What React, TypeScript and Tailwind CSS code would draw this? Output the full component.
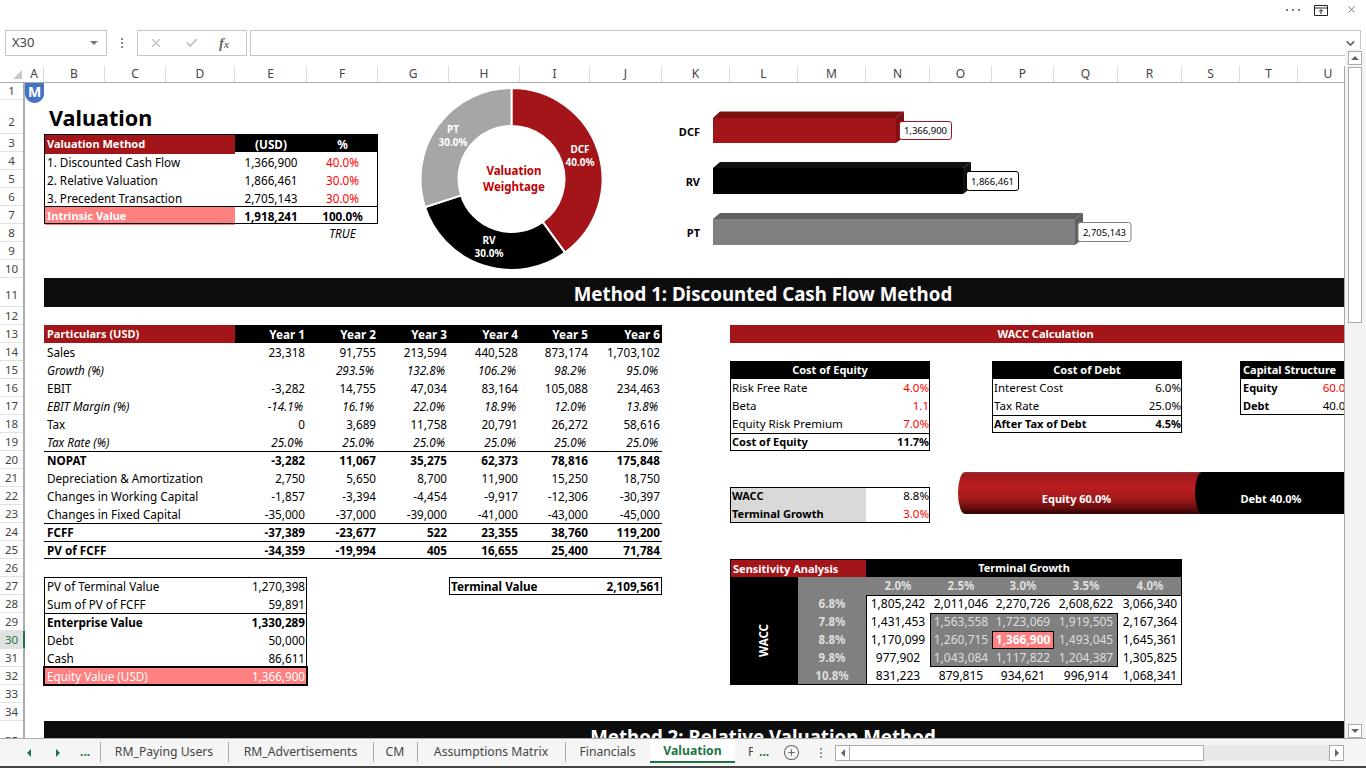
import { Check, ChevronDown, CirclePlus, X } from "lucide-react";
import clsx from "clsx";
import type { ReactNode } from "react";

const columns = ["A", "B", "C", "D", "E", "F", "G", "H", "I", "J", "K", "L", "M", "N", "O", "P", "Q", "R", "S", "T", "U"];
const rowNumbers = Array.from({ length: 35 }, (_, i) => i + 1);

const forecast = [
  { label: "Sales", values: ["23,318", "91,755", "213,594", "440,528", "873,174", "1,703,102"] },
  { label: "Growth (%)", kind: "italic", values: ["", "293.5%", "132.8%", "106.2%", "98.2%", "95.0%"] },
  { label: "EBIT", values: ["-3,282", "14,755", "47,034", "83,164", "105,088", "234,463"] },
  { label: "EBIT Margin (%)", kind: "italic", values: ["-14.1%", "16.1%", "22.0%", "18.9%", "12.0%", "13.8%"] },
  { label: "Tax", values: ["0", "3,689", "11,758", "20,791", "26,272", "58,616"] },
  { label: "Tax Rate (%)", kind: "italic", values: ["25.0%", "25.0%", "25.0%", "25.0%", "25.0%", "25.0%"] },
  { label: "NOPAT", kind: "total", values: ["-3,282", "11,067", "35,275", "62,373", "78,816", "175,848"] },
  { label: "Depreciation & Amortization", values: ["2,750", "5,650", "8,700", "11,900", "15,250", "18,750"] },
  { label: "Changes in Working Capital", values: ["-1,857", "-3,394", "-4,454", "-9,917", "-12,306", "-30,397"] },
  { label: "Changes in Fixed Capital", values: ["-35,000", "-37,000", "-39,000", "-41,000", "-43,000", "-45,000"] },
  { label: "FCFF", kind: "total", values: ["-37,389", "-23,677", "522", "23,355", "38,760", "119,200"] },
  { label: "PV of FCFF", kind: "total", values: ["-34,359", "-19,994", "405", "16,655", "25,400", "71,784"] },
];

const sensitivityRows = [
  { wacc: "6.8%", row: "row-start-3", values: ["1,805,242", "2,011,046", "2,270,726", "2,608,622", "3,066,340"] },
  { wacc: "7.8%", row: "row-start-4", values: ["1,431,453", "1,563,558", "1,723,069", "1,919,505", "2,167,364"] },
  { wacc: "8.8%", row: "row-start-5", values: ["1,170,099", "1,260,715", "1,366,900", "1,493,045", "1,645,361"] },
  { wacc: "9.8%", row: "row-start-6", values: ["977,902", "1,043,084", "1,117,822", "1,204,387", "1,305,825"] },
  { wacc: "10.8%", row: "row-start-7", values: ["831,223", "879,815", "934,621", "996,914", "1,068,341"] },
];

const tabs = [
  { name: "RM_Paying Users", width: "w-[128px]" },
  { name: "RM_Advertisements", width: "w-[145px]" },
  { name: "CM", width: "w-[44px]" },
  { name: "Assumptions Matrix", width: "w-[148px]" },
  { name: "Financials", width: "w-[85px]" },
];

// donut geometry, in page coordinates
const CX = 511.5;
const CY = 178;
function slice(from: number, to: number) {
  const pt = (r: number, a: number) => {
    const rad = (a * Math.PI) / 180;
    return `${(CX + r * Math.sin(rad)).toFixed(2)} ${(CY - r * Math.cos(rad)).toFixed(2)}`;
  };
  const large = to - from > 180 ? 1 : 0;
  return `M${pt(91, from)}A91 91 0 ${large} 1 ${pt(91, to)}L${pt(53, to)}A53 53 0 ${large} 0 ${pt(53, from)}Z`;
}

function Row({ className, children }: { className?: string; children: ReactNode }) {
  return <div className={clsx("col-span-full grid grid-cols-subgrid", className)}>{children}</div>;
}

function NarrowRow({ label, value, className, valueClass }: { label: string; value: string; className?: string; valueClass?: string }) {
  return (
    <Row className={className}>
      <div className="col-span-2 pl-[2px]">{label}</div>
      <div className={clsx("text-right pr-[1px]", valueClass)}>{value}</div>
    </Row>
  );
}

function Donut() {
  return (
    <svg viewBox="378 82 284 196" className="col-[7/11] row-[1/11] h-[196px] w-[284px] self-start">
      <path d={slice(0, 144)} fill="#a31518" stroke="#fff" strokeWidth="2" />
      <path d={slice(144, 252)} fill="#000" stroke="#fff" strokeWidth="2" />
      <path d={slice(252, 360)} fill="#a6a6a6" stroke="#fff" strokeWidth="2" />
      <g fill="#fff" fontSize="10" fontWeight="700" textAnchor="middle">
        <text x="580" y="152">DCF</text>
        <text x="580" y="165">40.0%</text>
        <text x="489" y="243">RV</text>
        <text x="489" y="256">30.0%</text>
        <text x="453" y="132">PT</text>
        <text x="453" y="145">30.0%</text>
      </g>
      <g fill="#c00000" fontSize="11.5" fontWeight="700" textAnchor="middle">
        <text x="514" y="174">Valuation</text>
        <text x="514" y="190">Weightage</text>
      </g>
    </svg>
  );
}

function BarChart() {
  return (
    <svg viewBox="662 100 500 170" className="col-[11/22] row-[2/11] h-[170px] w-[500px] self-start">
      <g fill="#000" fontSize="11" fontWeight="700" textAnchor="end">
        <text x="700" y="136">DCF</text>
        <text x="700" y="186">RV</text>
        <text x="700" y="237">PT</text>
      </g>
      <polygon points="713,118 720,111.5 904,111.5 896,118" fill="#7c0f10" />
      <polygon points="896,118 904,111.5 904,137 896,143" fill="#7c0f10" />
      <rect x="713" y="118" width="183" height="25" fill="#a31518" />
      <polygon points="713,168 720,162 971,162 963,168" fill="#111" />
      <polygon points="963,168 971,162 971,188 963,194" fill="#111" />
      <rect x="713" y="168" width="250" height="26" fill="#000" />
      <polygon points="713,219 720,213 1083,213 1075,219" fill="#606060" />
      <polygon points="1075,219 1083,213 1083,239 1075,245" fill="#606060" />
      <rect x="713" y="219" width="362" height="26" fill="#808080" />
      <g fill="#fff" strokeWidth="1">
        <rect x="899.5" y="121.5" width="52" height="18" rx="2.5" stroke="#a31518" />
        <rect x="966.5" y="171.5" width="52" height="19" rx="2.5" stroke="#000" />
        <rect x="1078" y="222.5" width="53" height="19" rx="2.5" stroke="#808080" />
      </g>
      <g fill="#000" fontSize="9.5" textAnchor="middle">
        <text x="925.5" y="134">1,366,900</text>
        <text x="992.5" y="184.5">1,866,461</text>
        <text x="1104.5" y="235.5">2,705,143</text>
      </g>
    </svg>
  );
}

function Sensitivity() {
  return (
    <div className="col-[12/19] row-[26/33] grid grid-cols-subgrid grid-rows-subgrid bg-black text-center text-[12px] outline outline-1 -outline-offset-1 outline-black">
      <div className="col-span-2 mt-[1px] ml-[1px] bg-[#a31518] pl-[2px] text-left text-[11px] font-bold text-white">Sensitivity Analysis</div>
      <div className="col-span-5 text-[11px] font-bold text-white">Terminal Growth</div>
      <div className="col-start-1 row-span-6 row-start-2 flex items-center justify-center pt-[18px] text-[11.5px] font-bold text-white">
        <span className="rotate-180 [writing-mode:vertical-rl]">WACC</span>
      </div>
      <div className="col-start-2 row-start-2 bg-[#808080]" />
      {["2.0%", "2.5%", "3.0%", "3.5%", "4.0%"].map((g) => (
        <div key={g} className="row-start-2 bg-[#808080] text-[11.5px] font-bold text-[#dedede]">{g}</div>
      ))}
      {sensitivityRows.map((row, r) => (
        <div key={row.wacc} className={clsx("col-[2/8] grid grid-cols-subgrid", row.row)}>
          <div className="bg-[#808080] text-[11.5px] font-bold text-[#dedede]">{row.wacc}</div>
          {row.values.map((v, c) => {
            const inner = r > 0 && r < 4 && c > 0 && c < 4;
            const center = r === 2 && c === 2;
            return (
              <div
                key={v}
                className={clsx(
                  center ? "bg-[#ff8080] font-bold text-white outline outline-1 -outline-offset-1 outline-black" : inner ? "bg-[#808080] text-[#dedede]" : "bg-white text-black"
                )}
              >
                {v}
              </div>
            );
          })}
        </div>
      ))}
      <div className="pointer-events-none col-start-3 col-end-8 row-start-3 row-end-8 outline outline-1 -outline-offset-1 outline-black" />
      <div className="pointer-events-none col-start-4 col-end-7 row-start-4 row-end-7 outline outline-1 -outline-offset-1 outline-black" />
    </div>
  );
}

function Sheet() {
  return (
    <div className="grid h-full w-[1333px] grid-cols-[19px_61px_61px_69px_72px_71px_71px_71px_70px_72px_68px_68px_68px_64px_62px_62px_64px_64px_58px_58px_60px] grid-rows-[17px_34px_repeat(8,18px)_29px_18px_repeat(22,18px)_29px] text-[11.7px] leading-[18px] text-black">
      {/* logo */}
      <svg viewBox="0 0 19 20" className="col-start-1 row-start-1 h-[20px] w-[19px]">
        <path d="M0 0H19V11C19 16 14 20 9.5 20C5 20 0 16 0 11Z" fill="#4472c4" />
        <text x="9.5" y="14" fill="#fff" fontSize="14" fontWeight="700" textAnchor="middle">M</text>
      </svg>

      <div className="col-[2/7] row-start-2 pt-[2px] pl-[5px] text-[21.6px] leading-[32px] font-bold">Valuation</div>

      {/* summary */}
      <div className="col-[2/7] row-[3/8] grid grid-cols-subgrid grid-rows-subgrid leading-[20px] outline outline-1 -outline-offset-1 outline-black">
        <Row className="bg-black font-bold text-white">
          <div className="col-span-3 mt-[1px] ml-[1px] bg-[#a31518] pl-[2px] text-[11px] leading-[18px]">Valuation Method</div>
          <div className="text-center">(USD)</div>
          <div className="text-center">%</div>
        </Row>
        {[
          ["1. Discounted Cash Flow", "1,366,900", "40.0%"],
          ["2. Relative Valuation", "1,866,461", "30.0%"],
          ["3. Precedent Transaction", "2,705,143", "30.0%"],
        ].map(([a, b, c]) => (
          <Row key={a}>
            <div className="col-span-3 pl-[3px]">{a}</div>
            <div className="text-center">{b}</div>
            <div className="text-center text-[#ff0000]">{c}</div>
          </Row>
        ))}
        <Row className="border-t border-black font-bold leading-[19px]">
          <div className="col-span-3 mb-[1px] ml-[1px] bg-[#ff8080] pl-[2px] text-[11px] leading-[17px] text-white">Intrinsic Value</div>
          <div className="text-center">1,918,241</div>
          <div className="text-center">100.0%</div>
        </Row>
      </div>
      <div className="col-start-6 row-start-8 text-center italic">TRUE</div>

      <Donut />
      <BarChart />

      {/* method 1 band */}
      <div className="col-[2/22] row-start-11 overflow-hidden bg-[#0d0d0d] pl-[124px] text-center text-[18.7px] leading-[32px] font-bold text-white">
        Method 1: Discounted Cash Flow Method
      </div>

      {/* forecast */}
      <div className="col-[2/11] row-[13/26] grid grid-cols-subgrid grid-rows-subgrid">
        <Row className="bg-black font-bold text-white">
          <div className="col-span-3 bg-[#a31518] pl-[3px] text-[11px]">Particulars (USD)</div>
          {["Year 1", "Year 2", "Year 3", "Year 4", "Year 5", "Year 6"].map((y) => (
            <div key={y} className="pr-[2px] text-right">{y}</div>
          ))}
        </Row>
        {forecast.map((row) => (
          <Row
            key={row.label}
            className={clsx(row.kind === "italic" && "italic", row.kind === "total" && "border-t border-black font-bold leading-[17px]", row.label === "PV of FCFF" && "border-b")}
          >
            <div className="col-span-3 pl-[3px]">{row.label}</div>
            {row.values.map((v, i) => (
              <div key={i} className={clsx("text-right", row.kind === "italic" ? "pr-[4px]" : "pr-[2px]")}>{v}</div>
            ))}
          </Row>
        ))}
      </div>

      {/* equity bridge */}
      <div className="col-[2/6] row-[27/33] grid grid-cols-subgrid grid-rows-subgrid outline outline-1 -outline-offset-1 outline-black">
        {[
          ["PV of Terminal Value", "1,270,398", ""],
          ["Sum of PV of FCFF", "59,891", ""],
          ["Enterprise Value", "1,330,289", "border-t border-black font-bold leading-[17px]"],
          ["Debt", "50,000", ""],
          ["Cash", "86,611", ""],
        ].map(([a, b, c]) => (
          <Row key={a} className={c}>
            <div className="col-span-3 pl-[3px]">{a}</div>
            <div className="pr-[2px] text-right">{b}</div>
          </Row>
        ))}
        <Row className="bg-[#ff8080] text-white outline outline-2 -outline-offset-1 outline-black">
          <div className="col-span-3 pl-[3px]">Equity Value (USD)</div>
          <div className="pr-[2px] text-right">1,366,900</div>
        </Row>
      </div>

      <div className="col-[8/11] row-start-27 grid grid-cols-subgrid font-bold outline outline-1 -outline-offset-1 outline-black">
        <div className="col-span-2 pl-[2px]">Terminal Value</div>
        <div className="pr-[2px] text-right">2,109,561</div>
      </div>

      {/* wacc */}
      <div className="col-[12/22] row-start-13 bg-[#a31518] pl-[3px] text-center text-[11px] font-bold text-white">
        WACC Calculation
      </div>

      <div className="col-[12/15] row-[15/20] grid grid-cols-subgrid grid-rows-subgrid text-[11.5px] outline outline-1 -outline-offset-1 outline-black">
        <div className="col-span-full bg-black text-center text-[11px] font-bold text-white">Cost of Equity</div>
        <NarrowRow label="Risk Free Rate" value="4.0%" valueClass="text-[#ff0000]" />
        <NarrowRow label="Beta" value="1.1" valueClass="text-[#ff0000]" />
        <NarrowRow label="Equity Risk Premium" value="7.0%" valueClass="text-[#ff0000]" />
        <NarrowRow label="Cost of Equity" value="11.7%" className="border-t border-black text-[11px] font-bold leading-[16px]" />
      </div>

      <div className="col-[16/19] row-[15/19] grid grid-cols-subgrid grid-rows-subgrid text-[11.5px] outline outline-1 -outline-offset-1 outline-black">
        <div className="col-span-full bg-black text-center text-[11px] font-bold text-white">Cost of Debt</div>
        <NarrowRow label="Interest Cost" value="6.0%" />
        <NarrowRow label="Tax Rate" value="25.0%" />
        <NarrowRow label="After Tax of Debt" value="4.5%" className="border-t border-black text-[11px] font-bold leading-[16px]" />
      </div>

      <div className="col-[20/22] row-[15/18] grid grid-cols-subgrid grid-rows-subgrid border-b border-l border-black text-[11.5px]">
        <div className="col-span-full bg-black pl-[2px] text-[11px] font-bold whitespace-nowrap text-white">Capital Structure</div>
        <Row>
          <div className="pl-[2px] text-[11px] font-bold">Equity</div>
          <div className="pr-[3px] text-right text-[#ff0000]">60.0%</div>
        </Row>
        <Row>
          <div className="pl-[2px] text-[11px] font-bold">Debt</div>
          <div className="pr-[3px] text-right">40.0%</div>
        </Row>
      </div>

      <div className="col-[12/15] row-[22/24] grid grid-cols-subgrid grid-rows-subgrid text-[11.5px] outline outline-1 -outline-offset-1 outline-black">
        <Row>
          <div className="col-span-2 ml-[1px] bg-[#d9d9d9] pl-[1px] text-[11px] font-bold">WACC</div>
          <div className="pr-[1px] text-right">8.8%</div>
        </Row>
        <Row>
          <div className="col-span-2 mb-[1px] ml-[1px] bg-[#d9d9d9] pl-[1px] text-[11px] leading-[17px] font-bold">Terminal Growth</div>
          <div className="pr-[1px] text-right text-[#ff0000]">3.0%</div>
        </Row>
      </div>

      {/* capital structure stacked pill */}
      <div className="col-[15/22] row-[21/24] mt-[3px] ml-[28px] flex h-[42px] text-[11px] leading-[42px] font-bold text-white">
        <div className="w-[245px] shrink-0 rounded-l-[7px_21px] bg-[linear-gradient(180deg,#8f3033_0%,#a01a1c_8%,#ba1d21_35%,#a51a1c_62%,#6a0d0e_85%,#2f0404_100%)] pt-[6px] pr-[8px] text-center">
          Equity 60.0%
        </div>
        <div className="z-10 -ml-[8px] w-[152px] shrink-0 rounded-l-[7px_21px] bg-black pt-[6px] text-center">Debt 40.0%</div>
      </div>

      <Sensitivity />

      {/* method 2 band */}
      <div className="col-[2/22] row-start-35 overflow-hidden bg-[#0d0d0d] pl-[124px] text-center text-[18.7px] leading-[32px] font-bold text-white">
        Method 2: Relative Valuation Method
      </div>
    </div>
  );
}

function FormulaBar() {
  return (
    <div className="flex h-[26px] items-stretch pl-[5px] text-[13px] text-[#444]">
      <div className="flex w-[102px] items-center justify-between border border-[#c6c6c6] pr-[8px] pl-[6px]">
        X30
        <span className="h-0 w-0 border-x-[4px] border-t-[4px] border-x-transparent border-t-[#777]" />
      </div>
      <div className="flex w-[30px] flex-col items-center justify-center gap-[2px]">
        <span className="size-[2px] bg-[#888]" />
        <span className="size-[2px] bg-[#888]" />
        <span className="size-[2px] bg-[#888]" />
      </div>
      <div className="flex w-[110px] items-center border border-[#c6c6c6]">
        <X className="ml-[11px] size-[14px] text-[#bdbdbd]" strokeWidth={2} />
        <Check className="ml-[22px] size-[14px] text-[#bdbdbd]" strokeWidth={3} />
        <span className="ml-[20px] font-['Liberation_Serif',serif] text-[15px] leading-none font-bold text-[#666] italic">
          f<span className="text-[10px]">x</span>
        </span>
      </div>
      <div className="ml-[3px] flex w-[1111px] items-center justify-end border border-[#c6c6c6] pr-[3px]">
        <ChevronDown className="size-[13px] text-[#666]" strokeWidth={3} />
      </div>
    </div>
  );
}

function VerticalScrollbar() {
  return (
    <div className="flex h-full w-[21px] flex-col bg-[#f3f3f3] pt-[2px] pr-[4px] pl-[3px]">
      <div className="flex h-[14px] items-center justify-center border border-[#ababab] bg-white">
        <span className="h-0 w-0 border-x-[4px] border-b-[4px] border-x-transparent border-b-[#666]" />
      </div>
      <div className="mt-[2px] h-[256px] border border-[#ababab] bg-white" />
      <div className="flex-1" />
      <div className="flex h-[14px] items-center justify-center border border-[#ababab] bg-white">
        <span className="h-0 w-0 border-x-[4px] border-t-[4px] border-x-transparent border-t-[#666]" />
      </div>
    </div>
  );
}

function TabBar() {
  return (
    <div className="flex h-[28px] items-stretch border-t border-[#ababab] bg-[#f5f5f5] text-[12.2px] text-[#444]">
      <div className="flex w-[100px] items-center pl-[27px]">
        <span className="h-0 w-0 border-y-[4px] border-r-[4px] border-y-transparent border-r-[#217346]" />
        <span className="ml-[25px] h-0 w-0 border-y-[4px] border-l-[4px] border-y-transparent border-l-[#217346]" />
        <span className="ml-[20px] font-bold text-[#217346]">...</span>
      </div>
      {tabs.map((t) => (
        <div key={t.name} className={clsx("relative mb-[3px] flex items-center justify-center pt-[2px]", t.width)}>
          <span className="absolute top-[3px] bottom-[1px] left-0 w-px bg-[#ababab]" />
          {t.name}
        </div>
      ))}
      <div className="mb-[3px] flex w-[85px] items-center justify-center border-b-2 border-[#217346] bg-white pt-[2px] font-bold text-[#217346]">
        Valuation
      </div>
      <div className="mb-[3px] flex w-[50px] items-center pt-[2px] pl-[13px]">
        <span className="w-[5px] overflow-hidden">F</span>
        <span className="ml-[6px] font-bold text-[#217346]">...</span>
      </div>
      <CirclePlus className="my-auto ml-[-2px] size-[17px] text-[#666]" strokeWidth={1.5} />
      <div className="ml-[20px] flex flex-col items-center justify-center gap-[2px]">
        <span className="size-[2px] bg-[#999]" />
        <span className="size-[2px] bg-[#999]" />
        <span className="size-[2px] bg-[#999]" />
      </div>
      <div className="my-auto ml-[13px] flex h-[16px] w-[509px] items-stretch bg-[#e8e8e8]">
        <div className="flex w-[15px] items-center justify-center border border-[#ababab] bg-white">
          <span className="h-0 w-0 border-y-[4px] border-r-[4px] border-y-transparent border-r-[#666]" />
        </div>
        <div className="w-[354px] border border-l-0 border-[#ababab] bg-white" />
        <div className="flex-1" />
        <div className="flex w-[15px] items-center justify-center border border-[#ababab] bg-white">
          <span className="h-0 w-0 border-y-[4px] border-l-[4px] border-y-transparent border-l-[#666]" />
        </div>
      </div>
    </div>
  );
}

export default function App() {
  return (
    <div className="flex h-screen w-[1366px] flex-col overflow-hidden bg-white font-['Noto_Sans',sans-serif]">
      {/* window buttons */}
      <div className="flex h-[30px] items-start justify-end pt-[4px] pr-[9px] text-[#444]">
        <div className="mt-[5px] mr-[14px] flex gap-[4px]">
          <span className="size-[2px] bg-[#777]" />
          <span className="size-[2px] bg-[#777]" />
          <span className="size-[2px] bg-[#777]" />
        </div>
        <svg viewBox="0 0 14 11" className="mt-[1px] mr-[18px] h-[11px] w-[14px]" fill="none" stroke="#222">
          <path d="M.5.5h13v10H.5zM.5 3h13M7 9V5M5 6.5 7 4.5l2 2" />
        </svg>
        <X className="size-[11px] text-[#444]" strokeWidth={1.5} />
      </div>
      <FormulaBar />
      <div className="h-[10px]" />

      <div className="flex min-h-0 flex-1">
        <div className="flex w-[1345px] shrink-0 flex-col overflow-hidden border-r border-[#ababab]">
          {/* column headers */}
          <div className="flex h-[17px] shrink-0 border-b border-[#ababab] text-[12px] text-[#444]">
            <div className="relative w-[25px] shrink-0">
              <span className="absolute right-[3px] bottom-[3px] h-0 w-0 border-b-[9px] border-l-[9px] border-b-[#c8c8c8] border-l-transparent" />
            </div>
            <div className="grid w-[1333px] shrink-0 grid-cols-[19px_61px_61px_69px_72px_71px_71px_71px_70px_72px_68px_68px_68px_64px_62px_62px_64px_64px_58px_58px_60px] leading-[16px]">
              {columns.map((c) => (
                <div key={c} className="border-r border-[#dcdcdc] text-center last:border-r-0">{c}</div>
              ))}
            </div>
          </div>

          <div className="flex min-h-0 flex-1">
            {/* row headers */}
            <div className="grid w-[25px] shrink-0 grid-rows-[17px_34px_repeat(8,18px)_29px_18px_repeat(22,18px)_29px] border-r-2 border-[#ababab] text-[11.5px] text-[#444]">
              {rowNumbers.map((n) => (
                <div
                  key={n}
                  className={clsx(
                    "flex items-center justify-center border-b border-[#e1e1e1] leading-none",
                    n === 2 && "pt-[11px]",
                    n === 11 && "pt-[6px]",
                    n === 30 && "-mr-[2px] border-r-2 border-r-[#217346] bg-[#e1e1e1] text-[#217346]",
                    n === 35 && "pt-[11px]"
                  )}
                >
                  {n}
                </div>
              ))}
            </div>
            <div className="min-w-0 flex-1 overflow-hidden">
              <Sheet />
            </div>
          </div>
        </div>
        <div className="-mt-[17px]">
          <VerticalScrollbar />
        </div>
      </div>

      <TabBar />
      <div className="h-[2px] bg-[#444]" />
    </div>
  );
}
